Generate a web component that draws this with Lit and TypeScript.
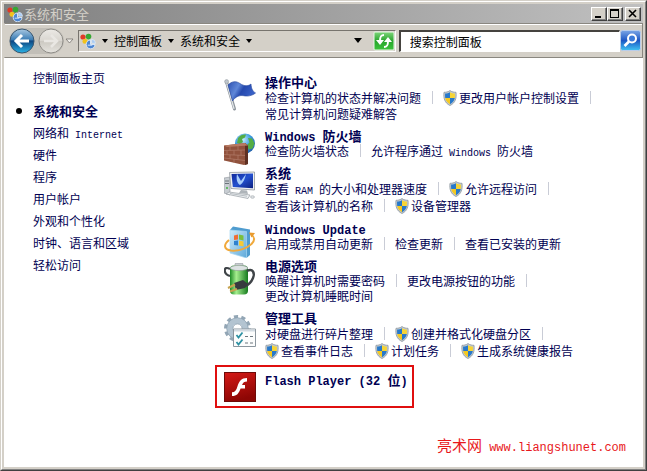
import { LitElement, html, css, svg, nothing } from "lit";
import { customElement } from "lit/decorators.js";

interface Task {
  text: string;
  shield?: boolean;
}
interface Row {
  tasks: Task[];
  open?: boolean; // the row ends with a divider because the list continues below
}
interface Category {
  title: string;
  icon: unknown;
  rows: Row[];
}

const sidebar = ["网络和 Internet", "硬件", "程序", "用户帐户", "外观和个性化", "时钟、语言和区域", "轻松访问"];

// Latin runs get the narrower monospaced face, half as wide as a Chinese character.
const mixed = (text: string) =>
  text
    .split(/([\x20-\x7e]+)/)
    .filter((part) => part)
    .map((part) => (/^[\x20-\x7e]/.test(part) ? html`<span class="latin">${part}</span>` : part));

const panelIcon = html`<svg class="panel-icon" viewBox="0 0 16 16" aria-hidden="true">
  <circle cx="3" cy="4" r="2.6" fill="#e03a26" />
  <circle cx="8.5" cy="3.6" r="2.8" fill="#36a832" />
  <circle cx="5" cy="8.2" r="2.5" fill="#f2c21c" />
  <path d="M10.500 7A4.400 4.400 0 1 0 15 11.500H10.500Z" fill="#4d86d2" stroke="#dcebfb" stroke-width=".9" />
  <path d="M11.600 6.200a4.300 4.300 0 0 1 4 4.100h-4Z" fill="#a9cbf3" stroke="#e7f1fc" stroke-width=".6" />
  <path d="M7.700 12.200h4.600" stroke="#cfe3fa" />
</svg>`;

const shieldIcon = html`<svg class="shield" viewBox="0 0 14 16" aria-hidden="true">
  <path d="M7 .6C5 2 3 2.3 1 2.3.3 8 1.6 13 7 15.5 12.400 13 13.700 8 13 2.300 11 2.300 9 2 7 .6Z" fill="#c5ccd1" stroke="#8b969e" stroke-width=".8" />
  <path d="M7 2.200V8H2.200C2 6.500 2 5 2.100 3.600 4 3.500 5.600 3.100 7 2.200Z" fill="#2879ca" />
  <path d="M7 2.200V8h4.800c.2-1.500.2-3 .1-4.400C10 3.500 8.400 3.100 7 2.200Z" fill="#f6d436" />
  <path d="M2.200 8H7v6.200C4.300 12.800 2.700 10.700 2.200 8Z" fill="#f4c922" />
  <path d="M11.800 8H7v6.200c2.700-1.400 4.300-3.500 4.800-6.200Z" fill="#2879ca" />
</svg>`;

const flagIcon = svg`
  <defs><linearGradient id="flag" x1="0" x2="1" y2=".4">
    <stop stop-color="#2c50b0" /><stop offset=".4" stop-color="#5f87d8" /><stop offset=".6" stop-color="#2549ae" /><stop offset="1" stop-color="#3a62c8" />
  </linearGradient></defs>
  <path d="M2.500 3 10.500 30" stroke="#8d949b" stroke-width="3" stroke-linecap="round" />
  <path d="M2.300 3 10 29.500" stroke="#e3e7ea" stroke-width="1.200" stroke-linecap="round" />
  <circle cx="2.600" cy="2.600" r="2" fill="#bfc6cb" stroke="#8d949b" stroke-width=".5" />
  <path d="M4 6C8 2 12 1.800 16 4.500S24 7.500 27 5c.3 5 2 7.500 4.500 9-4 3-8 3.500-12 2.700S11 18 8.500 22Z" fill="url(#flag)" stroke="#23459c" stroke-width=".6" />`;

const firewallIcon = svg`
  <defs><radialGradient id="globe" cx=".4" cy=".3" r=".8">
    <stop stop-color="#c3ecff" /><stop offset=".5" stop-color="#3b9bdc" /><stop offset="1" stop-color="#1a4f9c" />
  </radialGradient></defs>
  <circle cx="21" cy="10.500" r="10" fill="url(#globe)" />
  <path d="M14 5c2-3 6-4 8-3.500l-1 3-3 1.500 1 3-3 2-3-1ZM24 5l4 .5 2.500 5-2 5-4 1-1-5 2-2Z" fill="#54ad45" />
  <path d="M0 12.500 21 10l3 2.500V31L20 32 0 27.500Z" fill="#91523d" />
  <path d="m21 10 3 2.500V31l-3 1Z" fill="#5e3023" />
  <path d="M0 12.500 21 10l3 2.500L3 14Z" fill="#b77a62" />
  <path d="M0 17.500 21 17M0 21.500l21 1M0 25l21 2.500M6 13.500V17.500M14 13V17M3 17.500v4M10 17.500v4.500M17 17v5M6 22v4M14 22v4.500M10 26v4" stroke="#b27d6a" stroke-width=".7" fill="none" />`;

const systemIcon = svg`
  <defs><linearGradient id="screen" x2="1" y2="1">
    <stop stop-color="#10289a" /><stop offset=".5" stop-color="#2350cf" /><stop offset="1" stop-color="#0b2080" />
  </linearGradient></defs>
  <path d="m0 8 6-1v18l-6-2Z" fill="#c8cdd2" stroke="#8d949b" stroke-width=".6" />
  <path d="M1 11h4M1 13.500h4" stroke="#6c747b" />
  <circle cx="3" cy="18" r="1" fill="#43b243" />
  <path d="M5.500 2.500 30.500 2v18L7 18.500Z" fill="#eef0f2" stroke="#92989e" stroke-width=".8" />
  <path d="m7.500 4 21.500-.4v14.600L8.800 17Z" fill="url(#screen)" />
  <path d="M13 4c-1 5 0 9 3 11 3-2 5-6 6-11l-5 7Z" fill="#a8cdfb" />
  <path d="m17 20 6 .5 1 3.500-9-1Z" fill="#aeb4b9" />
  <path d="m5 22 21 3-2 3.500L2 24Z" fill="#edf0f2" stroke="#979da3" stroke-width=".7" />
  <path d="m6 23.500 17 2.700" stroke="#b7bdc2" />
  <ellipse cx="28.500" cy="27" rx="2" ry="1.300" fill="#dde1e4" stroke="#979da3" stroke-width=".5" />`;

const updateIcon = svg`
  <defs><linearGradient id="box" x2="1" y2="1">
    <stop stop-color="#cdeafa" /><stop offset="1" stop-color="#5ea9da" />
  </linearGradient></defs>
  <path d="m6 4 3-3.500 17 3V29l-3.500 3Z" fill="#4f9ccf" />
  <path d="M6 4 22.500 5.500V32L6 27Z" fill="url(#box)" stroke="#a7d7f2" stroke-width=".7" />
  <path d="m10 9.500 4-1v5l-4 .5Z" fill="#ef6c36" />
  <path d="m15 8.500 4.500 1v5L15 13.500Z" fill="#7abf3c" />
  <path d="m10 15 4-.5v5L10 19Z" fill="#2f81ce" />
  <path d="m15 14.500 4.500 1v5L15 19.500Z" fill="#f7c932" />
  <path d="M5 14C-1 19 0 23.500 7 24.500c8 .8 16-2.500 20.500-6.500 3.500-3.500 3.500-7 0-9" stroke="#f0a93c" stroke-width="2" fill="none" />
  <path d="m25 6.500 6 .5-3.500 4.500Z" fill="#e99a2d" />`;

const powerIcon = svg`
  <defs><linearGradient id="cell" x2="1">
    <stop stop-color="#1d8b25" /><stop offset=".35" stop-color="#a5ee8e" /><stop offset="1" stop-color="#157a1e" />
  </linearGradient></defs>
  <path d="M6 6C-1 2-1 11 6 13" stroke="#3f4448" stroke-width="2.200" fill="none" />
  <rect x="11" y="0" width="8" height="4" rx="1.500" fill="#c8cdd0" stroke="#858b90" stroke-width=".6" />
  <rect x="6" y="2.500" width="18" height="29" rx="4" fill="url(#cell)" />
  <ellipse cx="15" cy="5" rx="8.800" ry="2.600" fill="#dce2e2" stroke="#91999b" stroke-width=".6" />
  <path d="M23 8c6-3 8 2 6 7s-5 7-8 8" stroke="#3f4448" stroke-width="2.400" fill="none" />
  <path d="m10 20 9-3 5 4-3 4-9 2Z" fill="#373b3f" />
  <path d="m11 21.500-7 3.500M13 26l-7 2.500" stroke="#c6a24f" stroke-width="2" />`;

const toolsIcon = svg`
  <circle cx="13.500" cy="13.500" r="11.500" fill="none" stroke="#93a6b5" stroke-width="4" stroke-dasharray="4 3.200" />
  <circle cx="13.500" cy="13.500" r="7.800" fill="none" stroke="#b3c4d1" stroke-width="6" />
  <circle cx="13.500" cy="13.500" r="10.800" fill="none" stroke="#8297a8" stroke-width=".6" />
  <circle cx="13.500" cy="13.500" r="4.600" fill="#fff" stroke="#8297a8" stroke-width=".8" />
  <path d="M9.500 14h22v17.500h-22Z" fill="#fcfdfd" stroke="#8b969e" />
  <path d="M10 14.500h21v2H10Z" fill="#d2dbe2" />
  <path d="m12.500 20 2 2.500 4-5M12.500 27l2 2.500 4-5" stroke="#2d91a3" stroke-width="1.800" fill="none" />
  <path d="M21 21.500h3M26 21.500h3M21 28h3M26 28h3" stroke="#6d777f" />`;

const flashIcon = svg`
  <defs><linearGradient id="flash" y2="1" x2=".3">
    <stop stop-color="#d51a17" /><stop offset="1" stop-color="#8d0604" />
  </linearGradient></defs>
  <rect x=".5" y="1.500" width="31" height="29" fill="url(#flash)" stroke="#6e0a08" />
  <path d="M23 7v3.500c-2.800 0-4 1-5 3.500h3v3.500h-4.400c-1.800 5-3.800 7.500-8.600 7.500v-3.700c3 0 4.300-2 5.500-6C15 10.500 17.300 7 23 7Z" fill="#fff" />`;

const categories: Category[] = [
  {
    title: "操作中心",
    icon: flagIcon,
    rows: [
      { tasks: [{ text: "检查计算机的状态并解决问题" }, { text: "更改用户帐户控制设置", shield: true }], open: true },
      { tasks: [{ text: "常见计算机问题疑难解答" }] },
    ],
  },
  {
    title: "Windows 防火墙",
    icon: firewallIcon,
    rows: [{ tasks: [{ text: "检查防火墙状态" }, { text: "允许程序通过 Windows 防火墙" }] }],
  },
  {
    title: "系统",
    icon: systemIcon,
    rows: [
      { tasks: [{ text: "查看 RAM 的大小和处理器速度" }, { text: "允许远程访问", shield: true }], open: true },
      { tasks: [{ text: "查看该计算机的名称" }, { text: "设备管理器", shield: true }] },
    ],
  },
  {
    title: "Windows Update",
    icon: updateIcon,
    rows: [{ tasks: [{ text: "启用或禁用自动更新" }, { text: "检查更新" }, { text: "查看已安装的更新" }] }],
  },
  {
    title: "电源选项",
    icon: powerIcon,
    rows: [
      { tasks: [{ text: "唤醒计算机时需要密码" }, { text: "更改电源按钮的功能" }], open: true },
      { tasks: [{ text: "更改计算机睡眠时间" }] },
    ],
  },
  {
    title: "管理工具",
    icon: toolsIcon,
    rows: [
      { tasks: [{ text: "对硬盘进行碎片整理" }, { text: "创建并格式化硬盘分区", shield: true }], open: true },
      {
        tasks: [
          { text: "查看事件日志", shield: true },
          { text: "计划任务", shield: true },
          { text: "生成系统健康报告", shield: true },
        ],
      },
    ],
  },
];

@customElement("app-root")
export class AppRoot extends LitElement {
  static styles = css`
    :host {
      display: block;
      font: 12px/15px "Noto Sans CJK SC", sans-serif;
      color: #000;
    }
    * {
      box-sizing: border-box;
    }
    h1, h2, ul, p {
      margin: 0;
      padding: 0;
      list-style: none;
    }
    button {
      padding: 0;
      border: 0;
      background: none;
      font: inherit;
      color: inherit;
    }
    a {
      color: #000052;
      text-decoration: none;
      white-space: nowrap;
    }
    svg {
      display: block;
      flex: none;
    }
    .latin {
      font-family: "Liberation Mono", monospace;
      font-size: 10px;
      line-height: 1;
      white-space: pre;
    }
    .frame {
      border: 1px solid;
      border-color: #d4d0c8 #404040 #404040 #d4d0c8;
    }
    .window {
      display: flex;
      flex-direction: column;
      min-height: calc(100vh - 2px);
      padding: 2px;
      border: 1px solid;
      border-color: #fff #808080 #808080 #fff;
      background: #d4d0c8;
    }
    .title-bar {
      display: flex;
      align-items: center;
      height: 19px;
      padding: 0 2px 0 3px;
      background: linear-gradient(90deg, #808080, #c0c0c0);
    }
    .title-bar h1 {
      flex: 1;
      margin-left: 1px;
      font-size: 13px;
      font-weight: 400;
      color: #d4d0c8;
    }
    .panel-icon {
      width: 16px;
      height: 16px;
    }
    .caption {
      width: 16px;
      height: 14px;
      border: 1px solid;
      border-color: #fff #404040 #404040 #fff;
      background: #d4d0c8;
      box-shadow: inset -1px -1px #808080;
    }
    .caption.close {
      margin-left: 2px;
    }
    .tools {
      display: flex;
      align-items: center;
      height: 35px;
      padding: 0 1px 0 4px;
      border: 1px solid #8a8780;
      border-left-color: #d4d0c8;
      box-shadow: inset 0 1px #fff;
    }
    .travel {
      display: flex;
      border-radius: 13px;
      background: #c2bfb8;
      gap: 3px;
    }
    .recent {
      margin: 0 4px 0 1px;
    }
    .address, .search {
      display: flex;
      align-items: center;
      height: 22px;
      border: 1px solid;
      border-color: #77746e #fff #fff #77746e;
    }
    .address {
      flex: 313;
      min-width: 0;
      padding-left: 1px;
    }
    .address a {
      color: #000;
    }
    .crumb-arrow {
      margin: 0 6px;
    }
    .spacer {
      flex: 1;
    }
    .refresh {
      margin-left: 11px;
    }
    .search {
      flex: 208;
      min-width: 0;
      margin-left: 3px;
      padding: 0 0 0 9px;
      border-width: 2px 1px 1px 2px;
      border-color: #45433f #fff #fff #45433f;
      background: #fff;
    }
    .search input {
      width: 100%;
      padding: 0;
      border: 0;
      outline: 0;
      background: none;
      font: inherit;
      color: #000;
    }
    .search input::placeholder {
      color: #000;
      opacity: 1;
    }
    .content {
      flex: 1;
      display: grid;
      grid-template-columns: 211px 1fr;
      background: #fff;
    }
    .sidebar {
      padding: 9px 0 0 29px;
      line-height: 22px;
    }
    .sidebar .current {
      display: flex;
      align-items: center;
      margin: 11px 0 0 -17px;
    }
    .sidebar .current::before {
      content: "";
      width: 6px;
      height: 6px;
      margin-right: 11px;
      border-radius: 3px;
      background: #000;
    }
    .sidebar .current a, h2 {
      font-size: 13px;
      font-weight: 700;
    }
    .main {
      display: flex;
      flex-direction: column;
      padding: 16px 17px 11px 0;
    }
    .list {
      display: flex;
      flex-direction: column;
      gap: 7px;
      padding-left: 9px;
    }
    .category {
      display: grid;
      grid-template-columns: 32px 1fr;
      column-gap: 9px;
      align-items: start;
    }
    .icon {
      width: 32px;
      height: 32px;
      margin: 5px 0 -8px;
    }
    h2 {
      height: 15px;
      line-height: 15px;
    }
    h2 a {
      display: block;
    }
    h2 .latin {
      font-size: 12px;
    }
    .row {
      display: flex;
      align-items: center;
      height: 15px;
    }
    .row.shielded {
      height: 17px;
    }
    .row a {
      display: flex;
      align-items: center;
      gap: 2px;
    }
    .row a + a::before, .row.open::after {
      content: "";
      width: 1px;
      height: 13px;
      margin: 0 8px 0 11px;
      background: #c9ccd6;
    }
    .shield {
      width: 14px;
      height: 16px;
    }
    .highlight {
      align-self: flex-start;
      display: flex;
      align-items: center;
      gap: 9px;
      height: 43px;
      margin-top: 6px;
      padding: 0 4px 0 7px;
      border: 2px solid #e00f0f;
    }
    .highlight .icon {
      margin: 0;
    }
    .highlight h2 {
      margin-bottom: 14px;
    }
    .site {
      margin-top: auto;
      text-align: right;
      font-size: 15px;
      line-height: 22px;
      color: #e8181c;
    }
    .site .latin {
      font-size: 12px;
    }
  `;

  private arrow() {
    return html`<svg class="crumb-arrow" width="6" height="4" viewBox="0 0 6 4" aria-hidden="true">
      <path d="M0 0h6L3 4Z" />
    </svg>`;
  }

  private row(row: Row) {
    const shielded = row.tasks.some((task) => task.shield);
    return html`<div class="row ${shielded ? "shielded" : ""} ${row.open ? "open" : ""}">
      ${row.tasks.map(
        (task) => html`<a href="#">${task.shield ? shieldIcon : nothing}<span>${mixed(task.text)}</span></a>`
      )}
    </div>`;
  }

  render() {
    return html`
      <div class="frame" lang="zh-CN">
        <div class="window">
          <header class="title-bar">
            ${panelIcon}
            <h1>系统和安全</h1>
            <button class="caption" aria-label="最小化">
              <svg width="14" height="12" viewBox="0 0 14 12"><path d="M3 8h6v2H3Z" /></svg>
            </button>
            <button class="caption" aria-label="最大化">
              <svg width="14" height="12" viewBox="0 0 14 12"><path d="M2 1h9v9H2Zm1 2v6h7V3Z" fill-rule="evenodd" /></svg>
            </button>
            <button class="caption close" aria-label="关闭">
              <svg width="14" height="12" viewBox="0 0 14 12"><path d="m3 2 7 7M10 2 3 9" stroke="#000" stroke-width="1.600" /></svg>
            </button>
          </header>

          <div class="tools">
            <div class="travel">
              <button aria-label="后退">
                <svg width="26" height="26" viewBox="0 0 26 26">
                  <defs>
                    <linearGradient id="back" x2="0" y2="1">
                      <stop stop-color="#a9c8e2" /><stop offset=".45" stop-color="#3a7cb4" />
                      <stop offset=".5" stop-color="#0d4682" /><stop offset="1" stop-color="#2bb3e6" />
                    </linearGradient>
                  </defs>
                  <circle cx="13" cy="13" r="12" fill="url(#back)" stroke="#39566f" />
                  <path d="M20 13H8M13 7l-6 6 6 6" stroke="#fff" stroke-width="3" fill="none" />
                </svg>
              </button>
              <button aria-label="前进">
                <svg width="26" height="26" viewBox="0 0 26 26">
                  <defs>
                    <linearGradient id="next" x2="0" y2="1">
                      <stop stop-color="#eceae6" /><stop offset=".48" stop-color="#d9d6d0" />
                      <stop offset=".5" stop-color="#cbc8c1" /><stop offset="1" stop-color="#e6e4df" />
                    </linearGradient>
                  </defs>
                  <circle cx="13" cy="13" r="12" fill="url(#next)" stroke="#8f8d88" />
                  <path d="M6 13h12M13 7l6 6-6 6" stroke="#e9e7e3" stroke-width="2.500" fill="none" />
                </svg>
              </button>
            </div>
            <button class="recent" aria-label="最近的页面">
              <svg width="9" height="6" viewBox="0 0 9 6"><path d="M1 1h7L4.500 5Z" fill="#f2f0ec" stroke="#77746e" stroke-width=".8" /></svg>
            </button>
            <nav class="address" aria-label="地址">
              ${panelIcon} ${this.arrow()}
              <a href="#">控制面板</a>
              ${this.arrow()}
              <a href="#">系统和安全</a>
              ${this.arrow()}
              <span class="spacer"></span>
              <button aria-label="以前的位置">
                <svg width="8" height="5" viewBox="0 0 8 5"><path d="M0 0h8L4 5Z" /></svg>
              </button>
              <button class="refresh" aria-label="刷新">
                <svg width="22" height="20" viewBox="0 0 22 20">
                  <defs>
                    <linearGradient id="refresh" x2="0" y2="1">
                      <stop stop-color="#7fd67c" /><stop offset=".5" stop-color="#27a52c" /><stop offset="1" stop-color="#3cc43c" />
                    </linearGradient>
                  </defs>
                  <rect x="1" y="1" width="20" height="18" rx="1" fill="url(#refresh)" stroke="#e9f7e7" />
                  <path d="M11 4C7.500 4 7 6 7 10M11 16c3.500 0 4-2 4-6" stroke="#fff" stroke-width="2" fill="none" />
                  <path d="M3 9h8l-4 5ZM11 11h8l-4-5Z" fill="#fff" />
                </svg>
              </button>
            </nav>
            <div class="search">
              <input type="text" placeholder="搜索控制面板" aria-label="搜索控制面板" />
            </div>
            <button aria-label="搜索">
              <svg width="21" height="21" viewBox="0 0 21 21">
                <defs>
                  <linearGradient id="find" x2="0" y2="1">
                    <stop stop-color="#7ba6e6" /><stop offset=".5" stop-color="#1c57c4" /><stop offset="1" stop-color="#3fc4f3" />
                  </linearGradient>
                </defs>
                <rect x=".5" y=".5" width="20" height="20" rx="2" fill="url(#find)" stroke="#b9cdea" />
                <circle cx="12" cy="8.500" r="4" fill="#3c7bd9" stroke="#fff" stroke-width="2" />
                <path d="m9 11.500-4.500 4.500" stroke="#fff" stroke-width="2.600" />
              </svg>
            </button>
          </div>

          <div class="content">
            <nav class="sidebar" aria-label="类别">
              <a href="#">控制面板主页</a>
              <ul>
                <li class="current"><a href="#" aria-current="page">系统和安全</a></li>
                ${sidebar.map((name) => html`<li><a href="#">${mixed(name)}</a></li>`)}
              </ul>
            </nav>
            <main class="main">
              <div class="list">
                ${categories.map(
                  (category) => html`<section class="category">
                    <svg class="icon" viewBox="0 0 32 32" fill="none" aria-hidden="true">${category.icon}</svg>
                    <div>
                      <h2><a href="#">${mixed(category.title)}</a></h2>
                      ${category.rows.map((row) => this.row(row))}
                    </div>
                  </section>`
                )}
              </div>
              <section class="highlight">
                <svg class="icon" viewBox="0 0 32 32" aria-hidden="true">${flashIcon}</svg>
                <h2><a href="#">${mixed("Flash Player (32 位)")}</a></h2>
              </section>
              <p class="site">${mixed("亮术网 www.liangshunet.com")}</p>
            </main>
          </div>
        </div>
      </div>
    `;
  }
}
